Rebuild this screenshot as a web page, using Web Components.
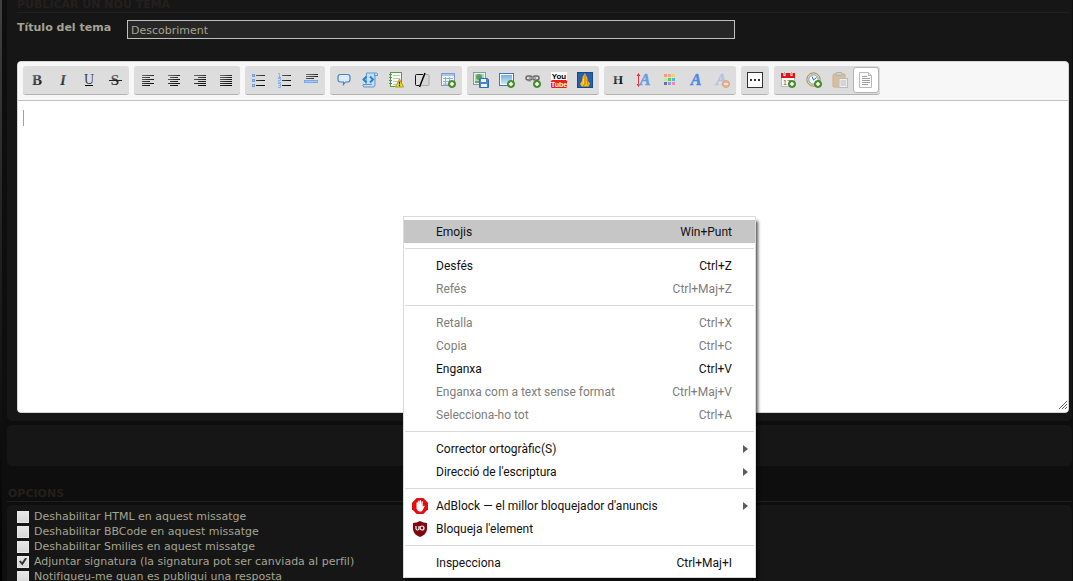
<!DOCTYPE html>
<html lang="ca">
<head>
<meta charset="utf-8">
<title>Publicar un nou tema</title>
<style>
html,body{margin:0;height:100%}
body{background:#0e0e0e;color:#a5a390;font:11px/15px "DejaVu Sans",Verdana,sans-serif;overflow:hidden}
</style>
</head>
<body>
<forum-page>
  <forum-panel kind="first">
    <section-title>PUBLICAR UN NOU TEMA</section-title>
    <topic-field></topic-field>
    <post-editor></post-editor>
  </forum-panel>
  <forum-panel kind="empty"></forum-panel>
  <section-title kind="outer">OPCIONS</section-title>
  <forum-panel kind="options">
    <option-check>Deshabilitar HTML en aquest missatge</option-check>
    <option-check>Deshabilitar BBCode en aquest missatge</option-check>
    <option-check>Deshabilitar Smilies en aquest missatge</option-check>
    <option-check checked>Adjuntar signatura (la signatura pot ser canviada al perfil)</option-check>
    <option-check>Notifiqueu-me quan es publiqui una resposta</option-check>
  </forum-panel>
</forum-page>
<context-menu>
  <menu-item active keys="Win+Punt">Emojis</menu-item>
  <menu-line></menu-line>
  <menu-item keys="Ctrl+Z">Desfés</menu-item>
  <menu-item disabled keys="Ctrl+Maj+Z">Refés</menu-item>
  <menu-line></menu-line>
  <menu-item disabled keys="Ctrl+X">Retalla</menu-item>
  <menu-item disabled keys="Ctrl+C">Copia</menu-item>
  <menu-item keys="Ctrl+V">Enganxa</menu-item>
  <menu-item disabled keys="Ctrl+Maj+V">Enganxa com a text sense format</menu-item>
  <menu-item disabled keys="Ctrl+A">Selecciona-ho tot</menu-item>
  <menu-line></menu-line>
  <menu-item sub>Corrector ortogràfic(S)</menu-item>
  <menu-item sub>Direcció de l'escriptura</menu-item>
  <menu-line></menu-line>
  <menu-item sub icon="adblock">AdBlock — el millor bloquejador d'anuncis</menu-item>
  <menu-item icon="ublock">Bloqueja l'element</menu-item>
  <menu-line></menu-line>
  <menu-item keys="Ctrl+Maj+I">Inspecciona</menu-item>
</context-menu>

<script>
const define = (name, render) => customElements.define(name, class extends HTMLElement {
  connectedCallback() {
    if (this.shadowRoot) return;
    this.attachShadow({ mode: 'open' }).innerHTML = render(this);
  }
});

/* ---------- icons, all on a 16px grid ---------- */
const bars = rows => `<g fill="url(#ink)" shape-rendering="crispEdges">${rows.map(([x, y, w]) => `<rect x="${x}" y="${y}" width="${w}" height="1"/>`).join('')}</g>`;
const letter = (t, extra = '') => `<text x="8" y="13" text-anchor="middle" font-family="Liberation Serif,serif" font-size="15" fill="url(#soft)" ${extra}>${t}</text>`;
const bigA = (x, fill) => `<text x="${x}" y="13" text-anchor="middle" font-family="Liberation Serif,serif" font-size="16" font-weight="bold" font-style="italic" fill="${fill}" stroke="${fill}" stroke-width=".5">A</text>`;
const plus = (x = 11.5, y = 12) => `<circle cx="${x}" cy="${y}" r="3.6" fill="#4f9a2c" stroke="#2f6d17" stroke-width=".7"/><path d="M${x - 2} ${y}h4M${x} ${y - 2}v4" stroke="#fff" stroke-width="1.5"/>`;
const ys = [3, 5, 7, 9, 11, 13];
const ICONS = {
  bold: letter('B', 'font-weight="bold"'),
  italic: letter('I', 'font-weight="bold" font-style="italic"'),
  underline: `<text x="8" y="12" text-anchor="middle" font-family="Liberation Serif,serif" font-size="14" fill="#444">U</text><path d="M4 13.5h8" stroke="#000"/>`,
  strike: letter('S', 'font-weight="bold"') + '<path d="M2 8.5h13" stroke="#222"/>',
  left: bars(ys.map((y, i) => [2, y, i % 2 ? 8 : 12])),
  center: bars(ys.map((y, i) => i % 2 ? [4, y, 8] : [2, y, 12])),
  right: bars(ys.map((y, i) => i % 2 ? [6, y, 8] : [2, y, 12])),
  justify: bars(ys.map(y => [2, y, 12])),
  ul: '<g fill="#a9c8f5" stroke="#6f9fe6" stroke-width="1"><rect x="1.5" y="2.5" width="2" height="2"/><rect x="1.5" y="7.5" width="2" height="2"/><rect x="1.5" y="12.5" width="2" height="2"/></g>' + bars([[5, 3, 9], [5, 8, 9], [5, 13, 9]]),
  ol: '<g fill="none" stroke="#86b0ee" stroke-width="1"><path d="M1 1.500h1.500V5M1 5.500h3M1 6.500h2.500v2H1.500v2H4M1 11.500h2.500v4H1M1.500 13.500h2"/></g>' + bars([[5, 3, 9], [5, 8, 9], [5, 13, 9]]),
  rule: bars([[3, 2, 12], [3, 4, 12], [3, 6, 8]]) + '<rect x="1.500" y="8.500" width="13" height="2" fill="#a9c9f7" stroke="#79a7eb"/>',
  quote: '<path d="M4.500 2.500h7q2.500 0 2.500 2.500v2.500q0 2.500-2.500 2.500H9.500l-2 2.500V10h-3Q2 10 2 7.500V5q0-2.500 2.500-2.500z" fill="#dcebfb" stroke="#4a83c4" stroke-width="1.200"/>',
  code: '<path d="M4.500 1h10q1.500 0 1 2.500H13V13q0 2-2 2H2q-1.500-.500-1-2.500h3z" fill="#c5e0f8" stroke="#5b97d2"/><path d="M12.500 1.500V4M2 12.500h8" fill="none" stroke="#5b97d2"/><path d="M4.500 4.500 1.500 7.500l3 3M8 4.500l3 3-3 3" fill="none" stroke="#2f7fd6" stroke-width="2"/>',
  spoiler: '<rect x="2.500" y=".500" width="11" height="14" fill="#f6faf2" stroke="#579a49"/><path d="M5 3.500h7M5 6.500h7M5 9.500h7M5 12.500h7" stroke="#b9cbb9"/><path d="M1 2.500h3M1 5.500h3M1 8.500h3M1 11.500h3" stroke="#777"/><path d="m11.500 7 4 8h-8z" fill="#f3dc37" stroke="#b39a10" stroke-linejoin="round"/><path d="M11.500 9.500v3M11.500 13v1.200" stroke="#3b3200" stroke-width="1.200"/>',
  hide: '<path d="M10 2.500h4q1 0 1 1v9q0 1-1 1H7" fill="#d6d6d6" stroke="#aaa"/><path d="M9 2.500H2.500q-1 0-1 1v9q0 1 1 1H5" fill="none" stroke="#111"/><path d="M11 1 5.500 15" stroke="#000" stroke-width="1.500"/>',
  table: '<rect x="1.500" y="1.500" width="13" height="12" fill="#f5f9fe" stroke="#7a9cca"/><path d="M2 3h12" stroke="#a5c5ec" stroke-width="2"/><path d="M3 6.500h10M3 9.500h10M3 12h10M5.500 5v8M9.500 5v8" stroke="#92aed4"/>' + plus(12, 12),
  host: '<rect x=".500" y=".500" width="12" height="12" fill="#eaf4ea" stroke="#7d9f9d"/><rect x="2" y="2" width="9" height="9" fill="#a8cfe2"/><path d="M2 9h9v2H2z" fill="#75a560"/><circle cx="6" cy="5" r="3" fill="#5ea34f"/><path d="M6.500 6.500h8l1 1v8h-9z" fill="#4f83cd" stroke="#376cb6"/><path d="M8 7h5v3H8zM8 12h6v3H8z" fill="#edf4fd"/>',
  image: '<rect x=".500" y="1.500" width="14" height="12" fill="#f8fbff" stroke="#3d78bd"/><rect x="2" y="3" width="11" height="9" fill="url(#sky)"/>' + plus(12, 12),
  link: '<g fill="none" stroke="#666" stroke-width="1.500"><rect x="1" y="4" width="6" height="4" rx="2"/><rect x="8" y="4" width="6" height="4" rx="2"/></g><path d="M4 6h7" stroke="#999" stroke-width="1.500"/><path d="M3 9.500h3M10 9.500h3" stroke="#bbb"/>' + plus(12, 12),
  youtube: '<path d="M0 0h16v8H0z" fill="#fff"/><rect y="8" width="16" height="8" rx="1.500" fill="#f31c12"/><g font-family="Liberation Sans,sans-serif" font-weight="bold" text-anchor="middle"><text x="8" y="7" font-size="8">You</text><text x="8" y="15" font-size="7" fill="#fff">Tube</text></g>',
  flame: '<rect x=".500" y=".500" width="15" height="15" fill="#265fae" stroke="#174987"/><path d="M8 1q.500 2 2 4l1 4 2 2.500-1.500 3h-7L3 12l2-3 .500-4z" fill="#f8b718"/><path d="M8 3v9l-2 2M10 7l1 6" stroke="#c98205" fill="none"/><path d="M6.500 7v5" stroke="#ffe064"/>',
  heading: '<text x="8" y="12" text-anchor="middle" font-family="Liberation Serif,serif" font-size="13" font-weight="bold" fill="url(#ink)">H</text>',
  size: '<path d="M2.500 3v10" stroke="#e03434"/><path d="m2.500 1 2 3h-4zM2.500 15l2-3h-4z" fill="#e03434"/>' + bigA(9, '#6a9be2'),
  color: ['#f49a86', '#f8ab72', '#f8cf79', '#c1e99a', '#55cc66', '#47bcf0', '#5876b8', '#a595d0', '#e78cb4'].map((c, i) => `<rect x="${2 + i % 3 * 4}" y="${2 + (i / 3 | 0) * 4}" width="3" height="3" fill="${c}"/>`).join(''),
  font: bigA(8, '#4f8ae0'),
  unformat: `<g opacity=".5">${bigA(7, '#8aafe0')}<circle cx="12" cy="12" r="3.500" fill="#f08a50" stroke="#d96a30"/><path d="M10 12h4" stroke="#fff" stroke-width="1.500"/></g>`,
  more: '<rect x=".500" y=".500" width="15" height="15" fill="#fff" stroke="#333"/><path d="M3 7h2v2H3zM7 7h2v2H7zM11 7h2v2h-2z" fill="#333"/>',
  date: '<rect x="1.500" y="2.500" width="13" height="12" fill="#fbfbfb" stroke="#bbb"/><path d="M1 1h14v5H1z" fill="#e01414"/><path d="M4.500 0v4M11.500 0v4" stroke="#fff" stroke-width="2"/><path d="M4.500 0v3M11.500 0v3" stroke="#aaa"/><text x="7" y="13" text-anchor="middle" font-family="Liberation Sans,sans-serif" font-size="7" fill="#555">17</text>' + plus(12, 12),
  time: '<circle cx="7.500" cy="7.500" r="6.700" fill="#e7d6a5" stroke="#ab8c4f"/><circle cx="7.500" cy="7.500" r="4.700" fill="#f0f7ff" stroke="#6d9fd7"/><path d="M6 4.500 7.500 8l3-2.500" fill="none" stroke="#456a99"/>' + plus(12, 12),
  paste: '<g opacity=".5"><rect x="1" y="2" width="12" height="13" rx="1" fill="#d6a05c" stroke="#ba8244"/><rect x="4" y=".500" width="6" height="3" rx="1" fill="#c3c3c3" stroke="#888"/><rect x="7" y="6.500" width="8.500" height="9" fill="#fff" stroke="#999"/><path d="M8.500 9h5.500M8.500 11h5.500M8.500 13h5.500" stroke="#999"/></g>',
  source: '<path d="M1.500.500h9l3 3v12h-12z" fill="#fafafa" stroke="#b9b9b9"/><path d="M10.500.500v3h3" fill="#e4e4e4" stroke="#b9b9b9"/><path d="M4 4.500h5M4 6.500h8M4 8.500h8M4 10.500h8M4 12.500h6" stroke="#a0a0a0"/>',
  adblock: '<path d="M4.700 0h6.600L16 4.700v6.600L11.300 16H4.700L0 11.300V4.700z" fill="#e40d12"/><path d="M4.500 8.500V5q0-.800.700-.800T6 5v2l.200-4q.600-1 1.200 0v3.500L7.800 2.500q.600-.900 1.200 0l.100 4 .500-3q.600-.800 1.100 0v5l1.300-1q.900 0 .500 1l-2 4q-.600 1-1.500 1H7q-2.500-.500-2.500-4z" fill="#fff"/>',
  ublock: '<path d="M8 0q3.500 2 7 2v6q0 5-7 8-7-3-7-8V2q3.500 0 7-2z" fill="#800610"/><path d="M4 5v2.500Q4 9 5.500 9T7 7.500V5" fill="none" stroke="#fff" stroke-width="1.200"/><circle cx="10" cy="7" r="2" fill="none" stroke="#fff" stroke-width="1.200"/>'
};
define('tool-icon', el => `<style>
:host{display:block;width:16px;height:16px}
svg{display:block;overflow:visible}
</style><svg width="16" height="16" viewBox="0 0 16 16" aria-hidden="true"><defs>
<linearGradient id="ink" gradientUnits="userSpaceOnUse" x1="2" y1="2" x2="14" y2="14"><stop stop-color="#777"/><stop offset=".6" stop-color="#222"/><stop offset="1" stop-color="#000"/></linearGradient>
<linearGradient id="soft" gradientUnits="userSpaceOnUse" x1="3" y1="3" x2="13" y2="13"><stop stop-color="#777"/><stop offset="1" stop-color="#111"/></linearGradient>
<linearGradient id="sky" x2="0" y2="1"><stop stop-color="#77b0e0"/><stop offset="1" stop-color="#cde6f8"/></linearGradient>
</defs>${ICONS[el.getAttribute('name')]}</svg>`);

/* ---------- page parts ---------- */
define('forum-page', () => `<style>
:host{display:flex;flex-direction:column;box-sizing:border-box;height:100vh;overflow:hidden;padding:0 1px 0 7px;
background:linear-gradient(#404040,#222 40%,#000) 0 0/2px 100% no-repeat}
::slotted(*){flex:none}
</style><slot></slot>`);

define('forum-panel', () => `<style>
:host{display:block;box-sizing:border-box;background:#161617;border-radius:5px}
:host([kind=first]){padding:0 3px 8px 10px;border-radius:0 0 5px 5px}
:host([kind=empty]){height:41px;margin-top:4px}
:host([kind=options]){padding:4px 10px;margin-top:3px}
</style><slot></slot>`);

define('section-title', () => `<style>
:host{display:block;border-bottom:1px solid #202020}
h2{margin:0;font-size:11px;line-height:12px;height:12px;font-weight:bold;color:#241f1f}
:host(:not([kind])) h2{line-height:10px}
:host([kind=outer]){margin-top:22px;padding:0 1px 1px}
</style><h2><slot></slot></h2>`);

define('topic-field', () => `<style>
:host{display:grid;grid-template-columns:110px 608fr 334fr;padding:7px 0 22px}
label{font-weight:bold;line-height:15px}
input{box-sizing:border-box;min-width:0;height:19px;margin:0;padding:2px 3px 0;border:1px solid #c0c0c0;border-radius:0;background:#262626;color:#a5a390;font:inherit;outline:0}
</style><label for="t">Título del tema</label><input id="t" type="text" value="Descobriment">`);

define('tool-group', el => `<style>
:host{display:flex;padding:1px;height:26px;background:#ddd;border-bottom:1px solid #b0b0b0;border-radius:3px}
button{box-sizing:border-box;display:grid;place-items:center;width:26px;height:26px;padding:0;border:0;border-radius:3px;background:none}
button.on{background:#fff;border:1px solid #b4b4b4}
</style>${el.getAttribute('tools').split(' ').map(n => `<button type="button" aria-label="${n}"${n === 'source' ? ' class="on" aria-pressed="true"' : ''}><tool-icon name="${n}"></tool-icon></button>`).join('')}`);

define('post-editor', () => `<style>
:host{display:block;position:relative;border:1px solid #d5d5d5;border-radius:4px;background:#fff;overflow:hidden}
.bar{display:flex;flex-wrap:wrap;gap:5px;padding:4px 5px 5px;background:#f7f7f7;border-bottom:1px solid #c0c0c0}
textarea{display:block;box-sizing:border-box;width:100%;height:311px;border:0;padding:8px 5px;resize:none;outline:0;background:#fff;color:#111;font:inherit}
.caret{position:absolute;left:5px;top:48px;width:1px;height:16px;background:#a5a390}
.grip{position:absolute;right:1px;bottom:3px}
</style><div class="bar" role="toolbar">
<tool-group tools="bold italic underline strike"></tool-group>
<tool-group tools="left center right justify"></tool-group>
<tool-group tools="ul ol rule"></tool-group>
<tool-group tools="quote code spoiler hide table"></tool-group>
<tool-group tools="host image link youtube flame"></tool-group>
<tool-group tools="heading size color font unformat"></tool-group>
<tool-group tools="more"></tool-group>
<tool-group tools="date time paste source"></tool-group>
</div><textarea aria-label="Missatge"></textarea><span class="caret"></span>
<svg class="grip" width="8" height="8" viewBox="0 0 8 8" aria-hidden="true"><path d="M0 8 8 0M3 8l5-5M6 8l2-2" stroke="#666" fill="none"/></svg>`);

define('option-check', el => `<style>
:host{display:block}
label{display:flex;align-items:center;gap:5px;height:15px;line-height:15px}
input{appearance:none;box-sizing:border-box;display:grid;place-items:center;flex:none;width:12px;height:12px;margin:0;border:1px solid #e8e8e8;background:linear-gradient(#e6e6e6,#d8d8d8)}
input:checked::after{content:"";width:8px;height:8px;background:#333;clip-path:polygon(0 50%,20% 38%,38% 60%,80% 0,100% 12%,42% 100%)}
</style><label><input type="checkbox"${el.hasAttribute('checked') ? ' checked' : ''}><span><slot></slot></span></label>`);

/* ---------- context menu ---------- */
define('context-menu', () => `<style>
:host{position:absolute;left:403px;top:216px;box-sizing:border-box;width:353px;padding:3px 0;border:1px solid #dadada;background:#fff;color:#111;font:12px/21px Roboto,"Segoe UI",sans-serif;box-shadow:3px 4px 3px -1px rgba(0,0,0,.65)}
</style><div role="menu"><slot></slot></div>`);
define('menu-line', () => `<style>:host{display:block;height:1px;margin:5px 1px;background:#d9d9d9}</style>`);
define('menu-item', el => {
  const a = n => el.getAttribute(n);
  return `<style>
:host{display:block}
button{display:grid;grid-template-columns:16px 1fr auto;column-gap:8px;align-items:center;width:100%;height:23px;padding:0 23px 0 8px;border:0;background:none;color:inherit;font:inherit;text-align:left;white-space:nowrap}
button:disabled{color:#7d7d7d}
:host([active]) button{background:#c6c6c6}
:host([sub]) button{padding-right:7px}
.t,.k{padding-top:2px}
.t{grid-column:2}
.arrow{border:solid transparent;border-width:4px 0 4px 5px;border-left-color:#5c5c5c}
</style><button type="button" role="menuitem"${el.hasAttribute('disabled') ? ' disabled' : ''}>${a('icon') ? `<tool-icon name="${a('icon')}"></tool-icon>` : ''}<span class="t"><slot></slot></span>${a('keys') ? `<span class="k">${a('keys')}</span>` : ''}${el.hasAttribute('sub') ? '<span class="arrow"></span>' : ''}</button>`;
});
</script>
</body>
</html>
